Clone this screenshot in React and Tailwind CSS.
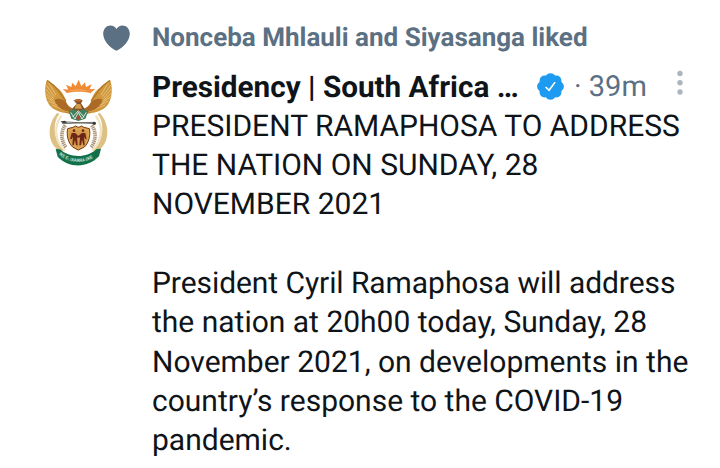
import React from "react";

const tweet = {
    likedBy: "Nonceba Mhlauli and Siyasanga liked",
    name: "Presidency | South Africa …",
    time: "39m",
    title: [
        "PRESIDENT RAMAPHOSA TO ADDRESS",
        "THE NATION ON SUNDAY, 28",
        "NOVEMBER 2021",
    ],
    body: [
        "President Cyril Ramaphosa will address",
        "the nation at 20h00 today, Sunday, 28",
        "November 2021, on developments in the",
        "country’s response to the COVID-19",
        "pandemic.",
    ],
};

const HeartIcon = () => (
    <svg viewBox="0 0 27 26" className="w-[27px] h-[26px]" fill="#5b7083">
        <path d="M13.5 25.7C11.6 25.7 0.2 18.3 0.2 8.6C0.2 3.9 3.6 0.4 7.5 0.4C10.2 0.4 12.2 1.7 13.5 4C14.8 1.7 16.8 0.4 19.5 0.4C23.4 0.4 26.8 3.9 26.8 8.6C26.8 18.3 15.4 25.7 13.5 25.7Z" />
    </svg>
);

const VerifiedBadge = () => (
    <svg viewBox="1.5 1.5 21 21" className="w-[27px] h-[27px]">
        <circle cx="12" cy="12" r="9.2" fill="#1d9bf0" />
        <g fill="#1d9bf0">
            <circle cx="12" cy="5.4" r="3.8" />
            <circle cx="16.67" cy="7.33" r="3.8" />
            <circle cx="18.6" cy="12" r="3.8" />
            <circle cx="16.67" cy="16.67" r="3.8" />
            <circle cx="12" cy="18.6" r="3.8" />
            <circle cx="7.33" cy="16.67" r="3.8" />
            <circle cx="5.4" cy="12" r="3.8" />
            <circle cx="7.33" cy="7.33" r="3.8" />
        </g>
        <path d="M8.2 12.4L10.9 15L15.6 8.6" fill="none" stroke="#fff" strokeWidth="1.3" />
    </svg>
);

const MoreIcon = () => (
    <svg viewBox="0 0 6 26" className="w-[6px] h-[26px]" fill="#aab5bf">
        <circle cx="3" cy="3.5" r="2.7" />
        <circle cx="3" cy="12.8" r="2.7" />
        <circle cx="3" cy="22" r="2.7" />
    </svg>
);

const Wing = () => (
    <g>
        <path d="M51 29C43 48 43 79 55 100C64 118 88 128 118 131L128 119C116 111 110 102 107 91C101 71 90 59 79 52Z" fill="#d0983c" />
        <path d="M74 90C80 112 99 125 122 132L134 119C122 113 112 108 106 94C94 86 83 84 74 90Z" fill="#ab6a26" />
        <path d="M54 35L78 75M49 46L74 80M47 57L71 86M46 69L71 92M50 81L74 98M56 93L82 106M65 105L91 115" stroke="#f3dca6" strokeWidth="1.8" fill="none" />
        <path d="M52 32C64 40 78 52 85 61C93 73 98 83 108 92" stroke="#b27626" strokeWidth="4" fill="none" />
        <path d="M78 108C90 119 104 123 118 127" stroke="#dfa94f" strokeWidth="3" fill="none" />
        {/* tusks and wheat ears */}
        <path d="M82 128C60 152 53 186 64 214C69 227 78 237 90 245L104 240C83 220 74 199 74 177C74 160 78 144 88 132Z" fill="#dcc084" />
        <path d="M94 137C80 156 75 181 81 203C85 219 94 232 105 241" stroke="#f0e4c2" strokeWidth="7" fill="none" />
        <path d="M106 166C92 183 92 210 108 232" stroke="#a58d74" strokeWidth="11" strokeDasharray="4 2" fill="none" />
        <path d="M107 167C95 183 95 210 110 230" stroke="#e4d3b3" strokeWidth="2" strokeDasharray="3 4" fill="none" />
    </g>
);

const CoatOfArms = () => (
    <svg viewBox="39 21 210 279" className="w-[70px] h-[93px]">
        <Wing />
        <g transform="matrix(-1 0 0 1 291 0)">
            <Wing />
        </g>
        {/* rising sun */}
        <path d="M98 57L115 59L108 44L124 51L127 38L137 49L146 29L154 49L165 37L168 51L185 43L179 58L196 56L182 69C170 66 158 65 145 65C132 65 121 66 111 69Z" fill="#f08a35" />
        <path d="M117 64C127 57 165 57 174 64C155 61 136 61 117 64Z" fill="#f7ad62" />
        {/* secretary bird and protea */}
        <path d="M132 92C139 85 153 85 158 92L153 100L164 117L156 130H134L126 117L140 101Z" fill="#83502c" />
        <path d="M129 91L145 87L157 93L145 95Z" fill="#c56a31" />
        <path d="M139 102L151 102L156 116H134Z" fill="#cf9a4a" />
        <path d="M116 124L132 117L145 127L158 117L175 124L166 146L145 153L124 146Z" fill="#3f8060" />
        <path d="M122 127L135 147L145 127L156 147L169 127M128 141L145 122L162 141" stroke="#f4f3e5" strokeWidth="2.6" fill="none" />
        <path d="M138 144L145 135L152 144L145 151Z" fill="#ab4a30" />
        {/* spear and knobkierie */}
        <path d="M94 155L195 161M96 161L191 157" stroke="#4b4b49" strokeWidth="2.4" fill="none" />
        <path d="M91 155L104 152L112 158L100 159Z" fill="#343638" />
        <circle cx="193" cy="160" r="5" fill="#343638" />
        {/* shield */}
        <path d="M111 172C121 169 130 168 136 162C142 168 149 168 155 162C161 168 170 169 180 172C186 193 181 221 165 235L145 246L126 235C111 221 106 193 111 172Z" fill="#fbf5e4" />
        <path d="M113 176C123 173 131 173 137 168C143 173 149 173 154 168C160 173 168 173 178 176C182 194 177 218 163 231L145 240L128 231C114 218 109 194 113 176Z" fill="#dda651" stroke="#753720" strokeWidth="3" />
        <path d="M118 182H173V203L165 222L145 232L126 222L118 203Z" fill="#d59a4c" />
        <g fill="#6d2718">
            <circle cx="132" cy="182" r="4" />
            <circle cx="159" cy="182" r="4" />
            <path d="M125 189H136L145 198L155 189H166L170 208L166 207L162 200L164 226H160L156 209L153 226H148L150 202L145 204L141 202L143 226H138L135 209L131 226H127L129 200L125 207L120 208Z" />
        </g>
        {/* motto ribbon */}
        <path d="M77 237L90 238C119 265 171 265 200 237L213 236L207 259C174 295 115 295 83 260Z" fill="#12704a" />
        <text className="font-['Liberation_Sans'] text-[14px] font-bold" fill="#d8e8dc" textLength="112" lengthAdjust="spacingAndGlyphs">
            <textPath href="#motto">!KE E: /XARRA //KE</textPath>
        </text>
        <path id="motto" d="M86 252C117 284 174 284 205 251" fill="none" />
    </svg>
);

const App = () => {
    return (
        <div className="w-[720px] h-[468px] overflow-hidden bg-white font-[Roboto,sans-serif] text-[#0f1419] [text-rendering:geometricPrecision]">
            {/* Liked by */}
            <div className="flex items-center pt-[17px]">
                <div className="w-[152px] shrink-0 flex justify-end pr-[22.5px]">
                    <HeartIcon />
                </div>
                <p className="text-[26px] leading-[42px] font-bold text-[#5b7083] whitespace-nowrap">{tweet.likedBy}</p>
            </div>

            <div className="flex pt-[8px]">
                {/* Avatar */}
                <div className="w-[152px] shrink-0 pl-[43px] pt-[10px]">
                    <CoatOfArms />
                </div>

                <div className="flex-1 min-w-0 whitespace-nowrap">
                    <div className="flex items-start h-[39.7px] text-[29px] leading-[41px]">
                        <span className="w-[385px] shrink-0 text-[29.7px] font-bold">{tweet.name}</span>
                        <div className="pt-[6px]">
                            <VerifiedBadge />
                        </div>
                        <span className="w-[113px] shrink-0 pl-[10px] text-[#5b7083]">· {tweet.time}</span>
                        <div className="pt-[3px]">
                            <MoreIcon />
                        </div>
                    </div>

                    {/* Tweet text */}
                    <div className="text-[30px] leading-[39.33px]">
                        {tweet.title.map((line) => (
                            <p key={line}>{line}</p>
                        ))}
                        <br />
                        {tweet.body.map((line, i) => (
                            <p key={line} className={i === 0 ? "tracking-[-0.07px]" : ""}>{line}</p>
                        ))}
                    </div>
                </div>
            </div>
        </div>
    );
};

export default App;
